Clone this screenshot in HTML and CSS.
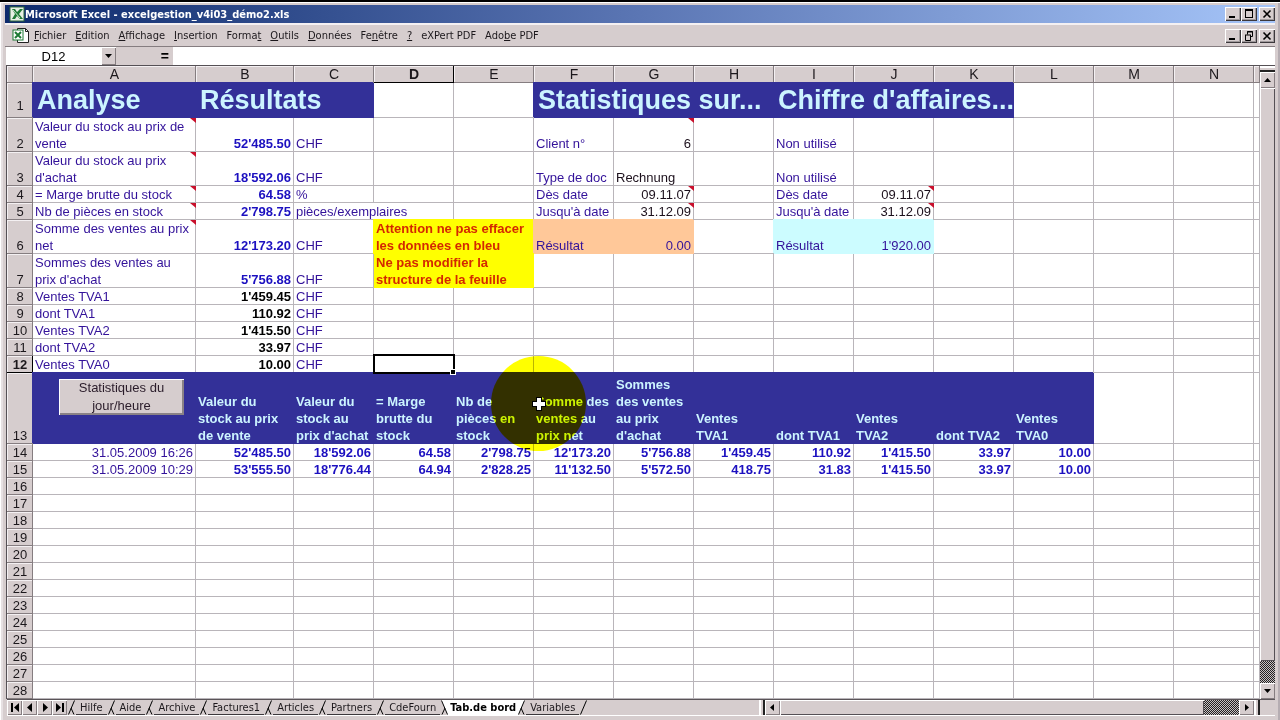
FILE: index.html
```html
<!DOCTYPE html>
<html lang="fr">
<head>
<meta charset="utf-8">
<title>Microsoft Excel - excelgestion_v4i03_démo2.xls</title>
<link rel="stylesheet" href="styles.css">
</head>
<body>
<div class="window">
  <header class="titlebar">
    <svg class="app-icon" width="16" height="16" viewBox="0 0 16 16"><rect x="1" y="1" width="14" height="14" fill="#e8f0e4" stroke="#2e6b3c"/><path d="M3 3h3l2 3 3-3h3l-4 5 4 5h-3l-3-3-2 3H3l3-5z" fill="#1f7a35"/><path d="M4 4l7 8" stroke="#cfe8cf"/></svg>
    <h1 class="title">Microsoft Excel - excelgestion_v4i03_démo2.xls</h1>
    <div class="controls">
      <button class="ctl" aria-label="Réduire"><svg width="12" height="10"><path d="M2 8h6" stroke="#000" stroke-width="2"/></svg></button>
      <button class="ctl" aria-label="Agrandir"><svg width="12" height="10"><path d="M2 1h8M2.500 1v8M9.500 1v8M2 8.500h8" stroke="#000" fill="none"/><path d="M2 1h8" stroke="#000" stroke-width="2"/></svg></button>
      <button class="ctl ctl-close" aria-label="Fermer"><svg width="12" height="10"><path d="M2.500 1.500l7 7M9.500 1.500l-7 7" stroke="#000" stroke-width="1.600"/></svg></button>
    </div>
  </header>

  <nav class="menubar">
    <svg class="doc-icon" width="18" height="16" viewBox="0 0 18 16"><path d="M5.500.5h8l3 3v11h-11z" fill="#fff" stroke="#222"/><path d="M13.500.5v3h3" fill="none" stroke="#222"/><rect x="1" y="2" width="10" height="10" fill="#fff" stroke="#1d7a34"/><path d="M3 4l6 6M9 4l-6 6" stroke="#1d7a34" stroke-width="2"/></svg>
    <button class="menu"><u>F</u>ichier</button>
    <button class="menu"><u>E</u>dition</button>
    <button class="menu"><u>A</u>ffichage</button>
    <button class="menu"><u>I</u>nsertion</button>
    <button class="menu">Forma<u>t</u></button>
    <button class="menu"><u>O</u>utils</button>
    <button class="menu"><u>D</u>onnées</button>
    <button class="menu">Fe<u>n</u>être</button>
    <button class="menu"><u>?</u></button>
    <button class="menu">eXPert PDF</button>
    <button class="menu">Ado<u>b</u>e PDF</button>
    <div class="controls">
      <button class="ctl" aria-label="Réduire le classeur"><svg width="12" height="10"><path d="M2 8h6" stroke="#000" stroke-width="2"/></svg></button>
      <button class="ctl" aria-label="Restaurer le classeur"><svg width="12" height="10"><path d="M4.500 3.500v-3h5v5h-2M4 1h6M2.500 4v5.500h5V4M2 4h6" stroke="#000" fill="none"/></svg></button>
      <button class="ctl ctl-close" aria-label="Fermer le classeur"><svg width="12" height="10"><path d="M2.500 1.500l7 7M9.500 1.500l-7 7" stroke="#000" stroke-width="1.600"/></svg></button>
    </div>
  </nav>

  <div class="formulabar">
    <input class="namebox" aria-label="Zone Nom" value="D12">
    <button class="drop" aria-label="Liste des noms"><svg width="7" height="4"><path d="M0 0h7L3.500 4z"/></svg></button>
    <button class="equals" aria-label="Modifier la formule">=</button>
    <input class="formula" aria-label="Barre de formule">
  </div>

  <main class="sheet">
    <div class="grid">
      <table class="cells">
        <colgroup><col class="c-head"><col class="c-a"><col class="c-b"><col span="12" class="c-std"><col></colgroup>
        <thead>
          <tr><th></th><th>A</th><th>B</th><th>C</th><th class="current">D</th><th>E</th><th>F</th><th>G</th><th>H</th><th>I</th><th>J</th><th>K</th><th>L</th><th>M</th><th>N</th><th></th></tr>
        </thead>
        <tbody>
          <tr class="r-title"><th>1</th><td class="navy big">Analyse</td><td class="navy big" colspan="2">Résultats</td><td></td><td></td><td class="navy big" colspan="3">Statistiques sur...</td><td class="navy big" colspan="3">Chiffre d'affaires...</td><td></td><td></td><td></td><td></td></tr>
          <tr class="r-two"><th>2</th><td class="note">Valeur du stock au prix de<br>vente</td><td class="num sum">52'485.50</td><td>CHF</td><td></td><td></td><td>Client n°</td><td class="num ink note">6</td><td></td><td>Non utilisé</td><td></td><td></td><td></td><td></td><td></td><td></td></tr>
          <tr class="r-two"><th>3</th><td class="note">Valeur du stock au prix<br>d'achat</td><td class="num sum">18'592.06</td><td>CHF</td><td></td><td></td><td>Type de doc</td><td class="ink">Rechnung</td><td></td><td>Non utilisé</td><td></td><td></td><td></td><td></td><td></td><td></td></tr>
          <tr><th>4</th><td class="note">= Marge brutte du stock</td><td class="num sum">64.58</td><td>%</td><td></td><td></td><td>Dès date</td><td class="num ink note">09.11.07</td><td></td><td>Dès date</td><td class="num ink note">09.11.07</td><td></td><td></td><td></td><td></td><td></td></tr>
          <tr><th>5</th><td class="note">Nb de pièces en stock</td><td class="num sum">2'798.75</td><td colspan="2">pièces/exemplaires</td><td></td><td>Jusqu'à date</td><td class="num ink note">31.12.09</td><td></td><td>Jusqu'à date</td><td class="num ink note">31.12.09</td><td></td><td></td><td></td><td></td><td></td></tr>
          <tr class="r-two"><th>6</th><td class="note">Somme des ventes au prix<br>net</td><td class="num sum">12'173.20</td><td>CHF</td><td class="warning" colspan="2" rowspan="2">Attention ne pas effacer<br>les données en bleu<br>Ne pas modifier la<br>structure de la feuille</td><td class="peach">Résultat</td><td class="peach num">0.00</td><td></td><td class="aqua">Résultat</td><td class="aqua num">1'920.00</td><td></td><td></td><td></td><td></td><td></td></tr>
          <tr class="r-two"><th>7</th><td>Sommes des ventes au<br>prix d'achat</td><td class="num sum">5'756.88</td><td>CHF</td><td></td><td></td><td></td><td></td><td></td><td></td><td></td><td></td><td></td><td></td></tr>
          <tr><th>8</th><td>Ventes TVA1</td><td class="num total">1'459.45</td><td>CHF</td><td></td><td></td><td></td><td></td><td></td><td></td><td></td><td></td><td></td><td></td><td></td><td></td></tr>
          <tr><th>9</th><td>dont TVA1</td><td class="num total">110.92</td><td>CHF</td><td></td><td></td><td></td><td></td><td></td><td></td><td></td><td></td><td></td><td></td><td></td><td></td></tr>
          <tr><th>10</th><td>Ventes TVA2</td><td class="num total">1'415.50</td><td>CHF</td><td></td><td></td><td></td><td></td><td></td><td></td><td></td><td></td><td></td><td></td><td></td><td></td></tr>
          <tr><th>11</th><td>dont TVA2</td><td class="num total">33.97</td><td>CHF</td><td></td><td></td><td></td><td></td><td></td><td></td><td></td><td></td><td></td><td></td><td></td><td></td></tr>
          <tr><th class="current">12</th><td>Ventes TVA0</td><td class="num total">10.00</td><td>CHF</td><td class="selected"></td><td></td><td></td><td></td><td></td><td></td><td></td><td></td><td></td><td></td><td></td><td></td></tr>
          <tr class="r-head"><th>13</th><td class="navy holder"><button class="macro">Statistiques du<br>jour/heure</button></td><td class="navy">Valeur du<br>stock au prix<br>de vente</td><td class="navy">Valeur du<br>stock au<br>prix d'achat</td><td class="navy">= Marge<br>brutte du<br>stock</td><td class="navy">Nb de<br>pièces en<br>stock</td><td class="navy spot">Somme des<br>ventes au<br>prix net</td><td class="navy">Sommes<br>des ventes<br>au prix<br>d'achat</td><td class="navy">Ventes<br>TVA1</td><td class="navy">dont TVA1</td><td class="navy">Ventes<br>TVA2</td><td class="navy">dont TVA2</td><td class="navy">Ventes<br>TVA0</td><td></td><td></td><td></td></tr>
          <tr><th>14</th><td class="num">31.05.2009 16:26</td><td class="num sum">52'485.50</td><td class="num sum">18'592.06</td><td class="num sum">64.58</td><td class="num sum">2'798.75</td><td class="num sum">12'173.20</td><td class="num sum">5'756.88</td><td class="num sum">1'459.45</td><td class="num sum">110.92</td><td class="num sum">1'415.50</td><td class="num sum">33.97</td><td class="num sum">10.00</td><td></td><td></td><td></td></tr>
          <tr><th>15</th><td class="num">31.05.2009 10:29</td><td class="num sum">53'555.50</td><td class="num sum">18'776.44</td><td class="num sum">64.94</td><td class="num sum">2'828.25</td><td class="num sum">11'132.50</td><td class="num sum">5'572.50</td><td class="num sum">418.75</td><td class="num sum">31.83</td><td class="num sum">1'415.50</td><td class="num sum">33.97</td><td class="num sum">10.00</td><td></td><td></td><td></td></tr>
          <tr><th>16<td><td><td><td><td><td><td><td><td><td><td><td><td><td><td></tr>
          <tr><th>17<td><td><td><td><td><td><td><td><td><td><td><td><td><td><td></tr>
          <tr><th>18<td><td><td><td><td><td><td><td><td><td><td><td><td><td><td></tr>
          <tr><th>19<td><td><td><td><td><td><td><td><td><td><td><td><td><td><td></tr>
          <tr><th>20<td><td><td><td><td><td><td><td><td><td><td><td><td><td><td></tr>
          <tr><th>21<td><td><td><td><td><td><td><td><td><td><td><td><td><td><td></tr>
          <tr><th>22<td><td><td><td><td><td><td><td><td><td><td><td><td><td><td></tr>
          <tr><th>23<td><td><td><td><td><td><td><td><td><td><td><td><td><td><td></tr>
          <tr><th>24<td><td><td><td><td><td><td><td><td><td><td><td><td><td><td></tr>
          <tr><th>25<td><td><td><td><td><td><td><td><td><td><td><td><td><td><td></tr>
          <tr><th>26<td><td><td><td><td><td><td><td><td><td><td><td><td><td><td></tr>
          <tr><th>27<td><td><td><td><td><td><td><td><td><td><td><td><td><td><td></tr>
          <tr><th>28<td><td><td><td><td><td><td><td><td><td><td><td><td><td><td></tr>
        </tbody>
      </table>
    </div>
    <div class="vscroll">
      <div class="vsplit"></div>
      <button class="arrow" aria-label="Vers le haut"><svg width="7" height="4"><path d="M0 4h7L3.500 0z"/></svg></button>
      <div class="thumb"></div>
      <div class="track"></div>
      <button class="arrow" aria-label="Vers le bas"><svg width="7" height="4"><path d="M0 0h7L3.500 4z"/></svg></button>
    </div>
  </main>

  <footer class="bottom">
    <div class="tabs">
      <button class="arrow" aria-label="Première feuille"><svg width="8" height="9"><path d="M0 0h2v9H0zM8 0v9L3 4.500z"/></svg></button>
      <button class="arrow" aria-label="Feuille précédente"><svg width="8" height="9"><path d="M6 0v9L1 4.500z"/></svg></button>
      <button class="arrow" aria-label="Feuille suivante"><svg width="8" height="9"><path d="M2 0v9l5-4.500z"/></svg></button>
      <button class="arrow" aria-label="Dernière feuille"><svg width="8" height="9"><path d="M6 0h2v9H6zM0 0v9l5-4.500z"/></svg></button>
      <svg class="edge" width="9" height="15"><path d="M1.500 14.500l6-14M4 8l3 6.500"/></svg>
      <button class="tab">Hilfe</button>
      <svg class="edge" width="9" height="15"><path d="M1.500 14.500l6-14M4 8l3 6.500"/></svg>
      <button class="tab">Aide</button>
      <svg class="edge" width="9" height="15"><path d="M1.500 14.500l6-14M4 8l3 6.500"/></svg>
      <button class="tab">Archive</button>
      <svg class="edge" width="9" height="15"><path d="M1.500 14.500l6-14M4 8l3 6.500"/></svg>
      <button class="tab">Factures1</button>
      <svg class="edge" width="9" height="15"><path d="M1.500 14.500l6-14M4 8l3 6.500"/></svg>
      <button class="tab">Articles</button>
      <svg class="edge" width="9" height="15"><path d="M1.500 14.500l6-14M4 8l3 6.500"/></svg>
      <button class="tab">Partners</button>
      <svg class="edge" width="9" height="15"><path d="M1.500 14.500l6-14M4 8l3 6.500"/></svg>
      <button class="tab">CdeFourn</button>
      <svg class="edge" width="9" height="15"><path class="white" d="M1 0h8v15H7.500z"/><path d="M1.500.5l6 14M5 8l-3 6.500"/></svg>
      <button class="tab tab-active">Tab.de bord</button>
      <svg class="edge" width="9" height="15"><path class="white" d="M0 0h8L1.500 15H0z"/><path d="M1.500 14.500l6-14M4 8l3 6.500"/></svg>
      <button class="tab">Variables</button>
      <svg class="edge" width="9" height="15"><path d="M1.500 14.500l6-14"/></svg>
    </div>
    <div class="hscroll">
      <div class="hsplit"></div>
      <button class="arrow" aria-label="Vers la gauche"><svg width="4" height="7"><path d="M4 0v7L0 3.500z"/></svg></button>
      <div class="thumb"></div>
      <div class="track"></div>
      <button class="arrow" aria-label="Vers la droite"><svg width="4" height="7"><path d="M0 0v7l4-3.500z"/></svg></button>
      <div class="hsplit"></div>
    </div>
    <div class="corner"></div>
  </footer>
</div>
</body>
</html>
```

FILE: styles.css
```css
:root {
  --face: #d6cdce;
  --shade: #857d80;
  --line: #b9b5ba;
  --navy: #333098;
  --ui: "DejaVu Sans Condensed", "DejaVu Sans", sans-serif;
  --cell: "Liberation Sans", Arial, sans-serif;
}

* { box-sizing: border-box; }

body {
  margin: 0;
  background: var(--face);
  font-family: var(--cell);
  font-size: 13px;
}

button, input {
  margin: 0;
  padding: 0;
  border: 0;
  border-radius: 0;
  background: none;
  color: #000;
  font: inherit;
}

svg { display: block; flex: none; }

.window {
  display: flex;
  flex-direction: column;
  min-height: 100vh;
  padding: 3px 5px 4px;
  border-top: 2px solid #000;
  box-shadow: inset 1px 1px 0 #fff, inset 3px 0 0 #e6e0e2, inset -2px 0 0 #b5adb2;
}

/* Title bar */
.titlebar {
  display: flex;
  align-items: center;
  height: 18px;
  padding-left: 4px;
  background: linear-gradient(90deg, #0d2a6c, #5b76b4 50%, #a5c4f8);
}

.title {
  flex: 1;
  margin: 0;
  padding-top: 1px;
  color: #fff;
  font: bold 11px/17px var(--ui);
}

.controls { display: flex; margin-left: auto; }

.ctl {
  display: grid;
  place-items: center;
  width: 16px;
  height: 14px;
  background: var(--face);
  box-shadow: inset 1px 1px 0 #fff, inset -1px -1px 0 #3c383c, inset -2px -2px 0 #a09a9c;
}

.ctl-close { margin-left: 2px; }

/* Menus */
.menubar {
  display: flex;
  align-items: center;
  gap: 9px;
  height: 24px;
  padding-left: 7px;
  border-top: 2px solid #f4f0f2;
  border-bottom: 1px solid var(--shade);
  background: var(--face);
}

.doc-icon { margin-right: -5px; }

.menu { font: 11px/18px var(--ui); color: #1c181c; }

/* Formula bar */
.formulabar {
  display: flex;
  height: 18px;
  background: var(--face);
}

.namebox {
  width: 95px;
  margin-left: 1px;
  background: #fff;
  text-align: center;
}

.drop, .arrow {
  display: grid;
  place-items: center;
  flex: none;
  width: 15px;
  background: var(--face);
  box-shadow: inset 1px 1px 0 #fff, inset -1px -1px 0 var(--shade);
}

.equals {
  width: 57px;
  padding-right: 4px;
  text-align: right;
  font-size: 14px;
  font-weight: bold;
}

.formula { flex: 1; min-width: 0; background: #fff; }

/* Worksheet */
.sheet {
  display: flex;
  flex: 1;
  margin-left: 1px;
  border-top: 1px solid #555055;
  border-left: 1px solid #555055;
  background: #fff;
}

.grid { flex: 1; min-width: 0; overflow: hidden; }

.cells {
  width: 100%;
  table-layout: fixed;
  border-collapse: separate;
  border-spacing: 0;
  color: #33129a;
  line-height: 17px;
}

.c-head { width: 26px; }
.c-a { width: 163px; }
.c-b { width: 98px; }
.c-std { width: 80px; }

.cells tr { height: 17px; }
.cells .r-title { height: 35px; }
.cells .r-two { height: 34px; }
.cells .r-head { height: 71px; }

.cells th {
  padding: 0;
  background: var(--face);
  box-shadow: inset -1px -1px 0 var(--shade), inset 1px 1px 0 #f4f0f2;
  color: #1c181c;
  font-weight: normal;
  vertical-align: bottom;
}

.cells thead th { font-size: 14px; }
.cells .r-title th { padding-bottom: 4px; }

.cells th.current {
  font-weight: bold;
  box-shadow: inset -1px -1px 0 #000, inset 1px 1px 0 #f4f0f2;
}

.cells td {
  position: relative;
  padding: 0 3px 0 2px;
  box-shadow: inset -1px -1px 0 var(--line);
  vertical-align: bottom;
  white-space: nowrap;
}

.cells .num { text-align: right; }
.cells .sum { color: #1c10c0; font-weight: bold; }
.cells .total { color: #000; font-weight: bold; }
.cells .ink { color: #1c101c; }

.cells .navy {
  background: var(--navy);
  box-shadow: -1px -1px 0 var(--navy);
  color: #ccf4ff;
  font-weight: bold;
}

.cells .big {
  overflow: hidden;
  padding: 0 4px;
  font-size: 27px;
  line-height: 35px;
}

.cells .warning {
  background: #ff0;
  box-shadow: -1px -1px 0 #ff0;
  color: #d42800;
  font-weight: bold;
}

.cells .peach { background: #ffc899; box-shadow: -1px -1px 0 #ffc899; }
.cells .aqua { background: #ccfcff; box-shadow: -1px -1px 0 #ccfcff; }

/* Comment marker in the corner of a cell */
.note::after {
  content: "";
  position: absolute;
  top: 0;
  right: 0;
  width: 6px;
  height: 5px;
  background: #c8102c;
  clip-path: polygon(0 0, 100% 0, 100% 100%);
}

.selected::before {
  content: "";
  position: absolute;
  z-index: 2;
  inset: -2px -1px -1px -1px;
  border: 2px solid #000;
}

.selected::after {
  content: "";
  position: absolute;
  z-index: 3;
  right: -2px;
  bottom: -2px;
  width: 4px;
  height: 4px;
  border: 1px solid #fff;
  background: #000;
}

.cells .holder { padding: 6px 0 0 26px; vertical-align: top; }

.macro {
  width: 125px;
  background: var(--face);
  box-shadow: inset 1px 1px 0 #fff, inset -2px -2px 0 #8a8286;
  color: #2a1c2a;
  font-weight: normal;
  line-height: 18px;
}

/* Pointer highlight */
.spot::before {
  content: "";
  position: absolute;
  z-index: 4;
  top: -17px;
  left: -43px;
  width: 95px;
  height: 95px;
  border-radius: 50%;
  background: #ff0;
  mix-blend-mode: multiply;
}

.spot::after {
  content: "";
  position: absolute;
  z-index: 5;
  top: 24px;
  left: -2px;
  width: 14px;
  height: 14px;
  background:
    linear-gradient(#fff, #fff) center / 4px 12px no-repeat,
    linear-gradient(#fff, #fff) center / 12px 4px no-repeat,
    linear-gradient(#000, #000) center / 6px 14px no-repeat,
    linear-gradient(#000, #000) center / 14px 6px no-repeat;
}

/* Scroll bars */
.vscroll {
  display: flex;
  flex-direction: column;
  width: 15px;
  background: var(--face);
}

.vsplit { height: 6px; border-top: 2px solid #fff; border-bottom: 2px solid #222; }
.vscroll .arrow { height: 16px; }

.thumb {
  flex: 1;
  background: var(--face);
  box-shadow: inset 1px 1px 0 #fff, inset -1px -1px 0 #555055;
}

.track {
  flex: none;
  background: repeating-conic-gradient(#222 0 25%, #c8c0c2 0 50%) 0 0 / 2px 2px;
}

.vscroll .track { height: 22px; }

.bottom {
  display: flex;
  height: 17px;
  margin-left: 2px;
  border-top: 1px solid #5a5458;
  border-bottom: 1px solid #fff;
}

.tabs { display: flex; flex: 3; min-width: 0; overflow: hidden; }

.tab {
  padding: 2px 4px 0;
  border-bottom: 1px solid #3c383c;
  color: #1c181c;
  font: 11px/12px var(--ui);
}

.tab-active {
  padding: 2px 1px 0;
  border-bottom-color: #fff;
  background: #fff;
  color: #000;
  font-weight: bold;
}

.edge path { fill: none; stroke: #000; }
.edge .white { fill: #fff; stroke: none; }

.hscroll { display: flex; flex: 2; }

.hsplit {
  width: 6px;
  border-left: 2px solid #fff;
  border-right: 2px solid #222;
}

.hscroll .track { width: 35px; }
.corner { width: 15px; }
```
